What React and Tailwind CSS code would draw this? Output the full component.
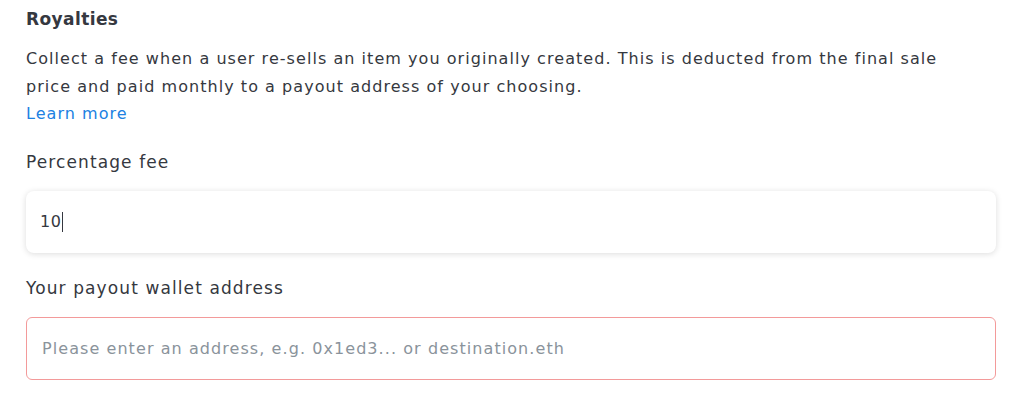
export default function App() {
  return (
    <div className="w-[1024px] h-[400px] bg-white overflow-hidden pl-[26px] pr-[28px] pt-[6px] text-[#353840]" style={{ fontFamily: '"DejaVu Sans", sans-serif' }}>
      <div className="text-[17px] font-bold leading-[26px] tracking-[0.4px]">Royalties</div>
      <p className="mt-[13px] text-[16px] leading-[27.5px] tracking-[1.05px] pr-[20px]">
        Collect a fee when a user re-sells an item you originally created. This is deducted from the final sale price and paid monthly to a payout address of your choosing.
        <br />
        <span className="text-[#2081e2]">Learn more</span>
      </p>
      <div className="mt-[22.5px] text-[17px] leading-[24px] tracking-[1.1px]">Percentage fee</div>
      <div className="mt-[17px] h-[62px] rounded-[8px] bg-white shadow-[0_1px_6px_rgba(0,0,0,0.14)] flex items-center px-[14px] text-[16px] tracking-[0.6px]">
        <span>10</span>
        <span className="inline-block w-px h-[20px] bg-[#353840]" />
      </div>
      <div className="mt-[23px] text-[17px] leading-[24px] tracking-[1.1px]">Your payout wallet address</div>
      <div className="mt-[17px] h-[63px] rounded-[6px] border border-[#f39a9a] flex items-center px-[15px] text-[16px] tracking-[1.07px] text-[#8a939b]">
        Please enter an address, e.g. 0x1ed3... or destination.eth
      </div>
    </div>
  );
}
